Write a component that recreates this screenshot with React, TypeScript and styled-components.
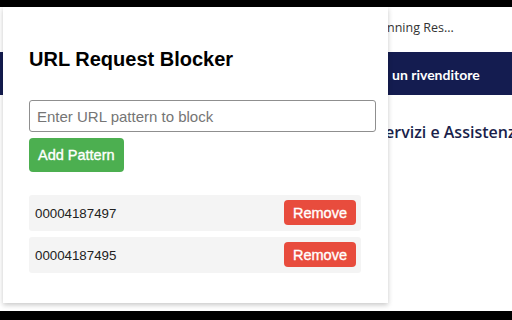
import React, { useState } from 'react';
import styled, { createGlobalStyle } from 'styled-components';

const GlobalStyle = createGlobalStyle`
  html, body {
    margin: 0;
    padding: 0;
    background: #000;
  }
`;

const initialPatterns = ['00004187497', '00004187495'];

function App() {
  const [patterns, setPatterns] = useState<string[]>(initialPatterns);
  const [value, setValue] = useState('');

  const addPattern = () => {
    if (!value.trim()) return;
    setPatterns([...patterns, value.trim()]);
    setValue('');
  };

  return (
    <Frame>
      <GlobalStyle />
      <Edge $h={7} />
      <Page>
        <Site>
          <SiteHeader>nning Res...</SiteHeader>
          <NavBar>un rivenditore</NavBar>
          <SectionTitle>ervizi e Assistenza</SectionTitle>
        </Site>
        <Popup>
          <Title>URL Request Blocker</Title>
          <PatternInput
            type="text"
            placeholder="Enter URL pattern to block"
            value={value}
            onChange={e => setValue(e.target.value)}
          />
          <AddButton onClick={addPattern}>Add Pattern</AddButton>
          <List>
            {patterns.map((p, i) => (
              <Item key={p + i}>
                <ItemText>{p}</ItemText>
                <RemoveButton onClick={() => setPatterns(patterns.filter((_, j) => j !== i))}>
                  Remove
                </RemoveButton>
              </Item>
            ))}
          </List>
        </Popup>
      </Page>
      <Edge $h={9} />
    </Frame>
  );
}

export default App;

const Frame = styled.div`
  width: 512px;
  height: 320px;
  display: flex;
  flex-direction: column;
  background: #000;
  overflow: hidden;
`;

const Edge = styled.div<{ $h: number }>`
  height: ${p => p.$h}px;
  flex: none;
  background: #000;
`;

const Page = styled.div`
  flex: 1;
  position: relative;
  background: #fff;
  overflow: hidden;
`;

const Site = styled.div`
  font-family: 'Open Sans', sans-serif;
`;

const SiteHeader = styled.div`
  height: 45px;
  box-sizing: border-box;
  padding: 13px 0 0 387px;
  font-size: 12.5px;
  line-height: 16px;
  color: #333;
  white-space: nowrap;
`;

const NavBar = styled.div`
  height: 43px;
  display: flex;
  align-items: center;
  padding-left: 392px;
  padding-top: 1px;
  box-sizing: border-box;
  background: #141c50;
  color: #fff;
  font-family: Lato, sans-serif;
  font-weight: 700;
  font-size: 14px;
  white-space: nowrap;
`;

const SectionTitle = styled.div`
  margin-top: 27px;
  padding-left: 385px;
  font-size: 16px;
  line-height: 20px;
  font-weight: 600;
  color: #1a1f4b;
  white-space: nowrap;
`;

const Popup = styled.div`
  position: absolute;
  left: 3px;
  top: 0;
  width: 385px;
  height: 296px;
  box-sizing: border-box;
  padding: 41px 27px 0 26px;
  background: #fff;
  box-shadow: 0 2px 5px rgba(0, 0, 0, 0.22);
  font-family: 'Liberation Sans', Arial, sans-serif;
  display: flex;
  flex-direction: column;
  align-items: flex-start;
`;

const Title = styled.h2`
  margin: 0;
  font-size: 20px;
  line-height: 23px;
  font-weight: 700;
  color: #000;
`;

const PatternInput = styled.input`
  margin-top: 29px;
  width: 347px;
  height: 32px;
  box-sizing: border-box;
  padding: 0 6px 0 7px;
  border: 1px solid #8f8f8f;
  border-radius: 3px;
  font-family: 'Liberation Sans', Arial, sans-serif;
  font-size: 15px;
  color: #222;
  outline: none;

  &::placeholder {
    color: #757575;
  }
`;

const AddButton = styled.button`
  margin-top: 6px;
  height: 34px;
  padding: 0 9px;
  border: none;
  border-radius: 4px;
  background: #4caf50;
  color: #fff;
  font-family: 'Liberation Sans', Arial, sans-serif;
  font-size: 14.5px;
  font-weight: 400;
  -webkit-text-stroke: 0.35px #fff;
  cursor: pointer;
`;

const List = styled.div`
  margin-top: 23px;
  align-self: stretch;
  display: flex;
  flex-direction: column;
  gap: 6px;
`;

const Item = styled.div`
  height: 36px;
  display: flex;
  align-items: center;
  justify-content: space-between;
  padding: 0 5px 0 6px;
  background: #f4f4f4;
  border-radius: 3px;
`;

const ItemText = styled.span`
  font-size: 13.3px;
  color: #222;
`;

const RemoveButton = styled.button`
  height: 25px;
  padding: 0 9px;
  margin-top: -1px;
  border: none;
  border-radius: 4px;
  background: #e84c3d;
  color: #fff;
  font-family: 'Liberation Sans', Arial, sans-serif;
  font-size: 14.5px;
  font-weight: 400;
  -webkit-text-stroke: 0.35px #fff;
  cursor: pointer;
`;
